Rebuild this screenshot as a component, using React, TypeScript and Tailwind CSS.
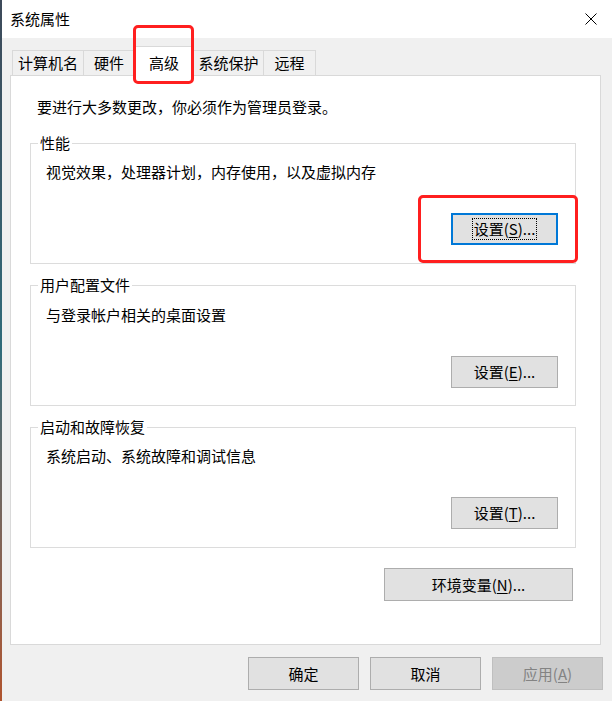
import React from "react"

const font = "font-['Noto_Sans_CJK_SC','Microsoft_YaHei',sans-serif]"

interface BtnProps {
    label: string
    hotkey?: string
    className?: string
    focused?: boolean
    disabled?: boolean
}

function WinButton({ label, hotkey, className = "", focused, disabled }: BtnProps) {
    const base = disabled
        ? "bg-[#cccccc] border border-[#bfbfbf] text-[#838383]"
        : focused
        ? "bg-[#e1e1e1] border-2 border-[#0078d7] text-black"
        : "bg-[#e1e1e1] border border-[#adadad] text-black"

    return (
        <div className={`flex items-center justify-center text-[15px] leading-[20px] ${base} ${className}`}>
            <span className={focused ? "px-[1px] outline outline-1 outline-dotted outline-black" : ""}>
                {label}
                {hotkey && (
                    <>
                        (<span className="underline underline-offset-2">{hotkey}</span>)
                    </>
                )}
                {hotkey && label !== "应用" ? "..." : ""}
            </span>
        </div>
    )
}

interface GroupProps {
    title: string
    desc: string
    hotkey: string
    focused?: boolean
    className?: string
    descPad?: string
}

function GroupBox({ title, desc, hotkey, focused, className = "", descPad = "pt-[18px]" }: GroupProps) {
    return (
        <div className={`relative ml-[19px] w-[546px] h-[121px] border border-[#dcdcdc] flex flex-col ${className}`}>
            <span className="absolute left-[7px] -top-[11px] px-[2px] bg-white leading-[20px] text-[15px]">{title}</span>
            <p className={`pl-[15px] leading-[20px] text-[15px] ${descPad}`}>{desc}</p>
            <WinButton
                label="设置"
                hotkey={hotkey}
                focused={focused}
                className="self-end mr-[17px] mt-[31px] w-[107px] h-[32px]"
            />
        </div>
    )
}

const tabs = [
    { name: "计算机名", w: "w-[72px]" },
    { name: "硬件", w: "w-[52px]" },
    { name: "高级", w: "w-[60px]", active: true },
    { name: "系统保护", w: "w-[71px]" },
    { name: "远程", w: "w-[53px]" },
]

export default function App() {
    return (
        <div className={`relative w-[612px] h-[701px] flex bg-[#f0f0f0] text-black overflow-hidden ${font}`}>
            <div className="w-[2px] h-full bg-gradient-to-b from-[#3d4a5a] via-[#2f6b7a] to-[#b0542e]" />

            <div className="flex-1 flex flex-col">
                {/* title bar */}
                <div className="h-[38px] bg-white flex items-center justify-between pl-[8px] pr-[15px]">
                    <span className="text-[15px] leading-[20px]">系统属性</span>
                    <svg width="12" height="12" viewBox="0 0 12 12" className="mt-[-1px]">
                        <path d="M0.5 0.5 L11.5 11.5 M11.5 0.5 L0.5 11.5" stroke="#000" strokeWidth="1" fill="none" />
                    </svg>
                </div>

                {/* tabs */}
                <div className="mt-[8px] ml-[10px] h-[29px] flex items-end">
                    {tabs.map((t) =>
                        t.active ? (
                            <div
                                key={t.name}
                                className={`${t.w} h-[30px] -mb-px -ml-px relative z-10 bg-white border border-b-0 border-[#d9d9d9] flex items-center justify-center pt-[2px] text-[15px] leading-[20px]`}
                            >
                                {t.name}
                            </div>
                        ) : (
                            <div
                                key={t.name}
                                className={`${t.w} h-[25px] -ml-px first:ml-0 bg-[#f0f0f0] border border-b-0 border-[#d9d9d9] flex items-center justify-center text-[15px] leading-[20px]`}
                            >
                                {t.name}
                            </div>
                        )
                    )}
                </div>

                {/* panel */}
                <div className="ml-[8px] w-[591px] h-[570px] bg-white border border-[#d9d9d9] flex flex-col">
                    <p className="mt-[21px] ml-[26px] text-[15px] leading-[20px]">要进行大多数更改，你必须作为管理员登录。</p>

                    <GroupBox
                        title="性能"
                        desc="视觉效果，处理器计划，内存使用，以及虚拟内存"
                        hotkey="S"
                        focused
                        className="mt-[26px]"
                    />
                    <GroupBox
                        title="用户配置文件"
                        desc="与登录帐户相关的桌面设置"
                        hotkey="E"
                        className="mt-[21px]"
                        descPad="pt-[19px]"
                    />
                    <GroupBox
                        title="启动和故障恢复"
                        desc="系统启动、系统故障和调试信息"
                        hotkey="T"
                        className="mt-[21px]"
                    />

                    <WinButton label="环境变量" hotkey="N" className="self-end mr-[27px] mt-[20px] w-[189px] h-[33px]" />
                </div>

                {/* bottom buttons */}
                <div className="mt-[12px] flex justify-end gap-[11px] pr-[9px]">
                    <WinButton label="确定" className="w-[111px] h-[33px]" />
                    <WinButton label="取消" className="w-[111px] h-[33px]" />
                    <WinButton label="应用" hotkey="A" disabled className="w-[111px] h-[33px]" />
                </div>
            </div>

            {/* red annotation boxes */}
            <div className="absolute left-[133px] top-[25px] w-[61px] h-[59px] border-[3px] border-[#ff1f1f] rounded-[5px] z-20" />
            <div className="absolute left-[418px] top-[195px] w-[160px] h-[68px] border-[3px] border-[#ff1f1f] rounded-[5px] z-20" />
        </div>
    )
}
